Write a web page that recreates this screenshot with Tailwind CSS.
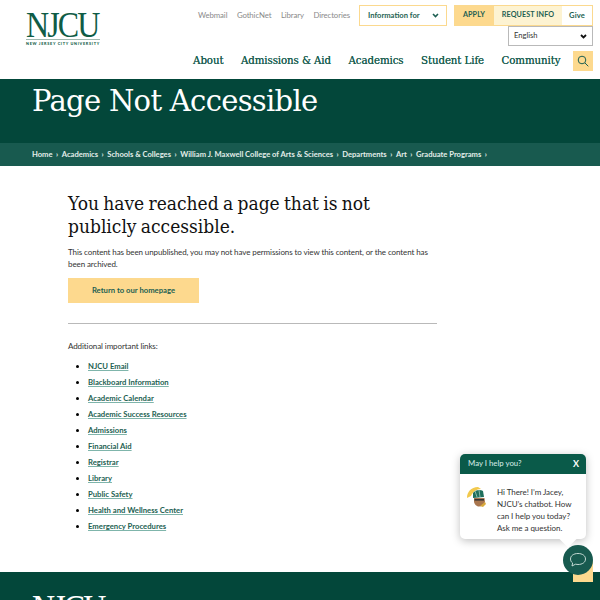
<!DOCTYPE html>
<html><head><meta charset="utf-8"><script src="https://cdn.jsdelivr.net/npm/@tailwindcss/browser@4"></script></head>
<body class="font-['Lato',sans-serif] bg-white">
<div class="relative w-[600px] h-[600px] overflow-hidden">
<header class="h-[79px] flex justify-between pl-[26px] pr-[7px]">
  <div class="pt-[9px] w-[74px] text-[#0f5c46]">
    <div class="font-['Liberation_Serif',serif] text-[32px] leading-[28px] tracking-[-1.9px] h-[30px] whitespace-nowrap scale-y-[1.1] origin-top">NJCU</div>
    <div class="border-t border-[#9fb8ae] pt-[1px] text-[3.8px] leading-[5px] font-black tracking-[0.72px] whitespace-nowrap">NEW JERSEY CITY UNIVERSITY</div>
  </div>
  <div class="flex flex-col items-end">
    <div class="flex items-start pt-[5px]">
      <div class="flex gap-[9.500px] h-[21px] items-center text-[7.800px] tracking-[-0.1px] text-[#8a8a8a] mr-[9px]"><span>Webmail</span><span>GothicNet</span><span>Library</span><span>Directories</span></div>
      <div class="w-[88px] h-[21px] border border-[#fbd98f] flex items-center justify-between pl-[8px] pr-[7px] text-[7.600px] font-bold text-[#1d5f52] mr-[7px]"><span>Information for</span><svg width="7" height="5" viewBox="0 0 7 5" fill="none" stroke="#1d5f52" stroke-width="1.6"><path d="M1 1l2.5 2.5L6 1"/></svg></div>
      <div class="flex flex-col items-end">
        <div class="flex h-[21px] w-[139px] border border-[#fbd98f] text-[7.200px] font-bold text-[#1d5f52] tracking-[0.1px]">
          <div class="w-[38px] bg-[#fdd98e] flex items-center justify-center">APPLY</div>
          <div class="w-[69px] bg-[#fdf3d2] border-l border-[#fbd98f] flex items-center justify-center">REQUEST INFO</div>
          <div class="flex-1 flex items-center justify-center text-[7.600px]">Give</div>
        </div>
        <div class="w-[85px] h-[20px] border border-[#b9b9b9] flex items-center justify-between pl-[5px] pr-[5px] text-[7.600px] text-[#333]"><span>English</span><svg width="7" height="5" viewBox="0 0 7 5" fill="none" stroke="#111" stroke-width="1.8"><path d="M1 1l2.5 2.5L6 1"/></svg></div>
      </div>
    </div>
    <div class="flex items-center gap-[17.500px] mt-[5px] font-['DejaVu_Serif_Condensed','DejaVu_Serif',serif] text-[11.400px] tracking-[-0.1px] text-[#1d5f52] [text-shadow:0_0_0.4px_#1d5f52]">
      <span>About</span><span>Admissions &amp; Aid</span><span>Academics</span><span>Student Life</span><span>Community</span>
      <div class="w-[20px] h-[20px] bg-[#fdd98e] flex items-center justify-center -ml-[5px]"><svg width="12" height="12" viewBox="0 0 12 12" fill="none" stroke="#1d5f52" stroke-width="1"><circle cx="5" cy="5" r="3.8"/><path d="M8 8l3.3 3.3"/></svg></div>
    </div>
  </div>
</header>
<section class="h-[64px] bg-[#03473a] pl-[32px] pt-[3px]"><h1 class="font-['DejaVu_Serif',serif] text-[29px] leading-[38px] tracking-[-0.7px] text-white">Page Not Accessible</h1></section>
<nav class="h-[23px] bg-[#185a4f] pl-[32px] flex items-center gap-[3.500px] text-[7.600px] font-bold text-[#e4eeea] whitespace-nowrap">
  <span>Home</span><span>›</span><span>Academics</span><span>›</span><span>Schools &amp; Colleges</span><span>›</span><span>William J. Maxwell College of Arts &amp; Sciences</span><span>›</span><span>Departments</span><span>›</span><span>Art</span><span>›</span><span>Graduate Programs</span><span>›</span>
</nav>
<main class="pl-[68px] pt-[26px] h-[380px] box-content">
  <h2 class="font-['DejaVu_Serif_Condensed','DejaVu_Serif',serif] text-[19px] leading-[23px] [word-spacing:-1.1px] text-[#111] w-[369px]">You have reached a page that is not publicly accessible.</h2>
  <p class="mt-[8px] text-[8px] leading-[12px] tracking-[-0.1px] text-[#333] w-[369px]">This content has been unpublished, you may not have permissions to view this content, or the content has been archived.</p>
  <a class="mt-[8px] w-[131px] h-[25px] bg-[#fdd98e] flex items-center justify-center text-[7.700px] font-bold text-[#1d5f52]">Return to our homepage</a>
  <div class="mt-[20px] w-[369px] border-t border-[#b9b9b9]"></div>
  <p class="mt-[16px] text-[8px] leading-[12px] tracking-[-0.1px] text-[#333]">Additional important links:</p>
  <ul class="mt-[6px] pl-[20px] list-disc text-[7.700px] leading-[16px] font-bold text-[#1d5f52] marker:text-black">
    <li><a class="underline decoration-[#7fb5ab]">NJCU Email</a></li>
    <li><a class="underline decoration-[#7fb5ab]">Blackboard Information</a></li>
    <li><a class="underline decoration-[#7fb5ab]">Academic Calendar</a></li>
    <li><a class="underline decoration-[#7fb5ab]">Academic Success Resources</a></li>
    <li><a class="underline decoration-[#7fb5ab]">Admissions</a></li>
    <li><a class="underline decoration-[#7fb5ab]">Financial Aid</a></li>
    <li><a class="underline decoration-[#7fb5ab]">Registrar</a></li>
    <li><a class="underline decoration-[#7fb5ab]">Library</a></li>
    <li><a class="underline decoration-[#7fb5ab]">Public Safety</a></li>
    <li><a class="underline decoration-[#7fb5ab]">Health and Wellness Center</a></li>
    <li><a class="underline decoration-[#7fb5ab]">Emergency Procedures</a></li>
  </ul>
</main>
<footer class="h-[28px] bg-[#03473a] pl-[32px] pt-[18px] overflow-hidden"><div class="font-['Liberation_Serif',serif] text-[32px] leading-[32px] tracking-[-1.9px] text-white scale-y-[1.1] origin-top">NJCU</div></footer>
<div class="absolute left-[573px] top-[561px] w-[20px] h-[21px] bg-[#fdd98e]"></div>
<div class="absolute left-[460px] top-[454px] w-[126px] h-[85px] rounded-[5px] bg-white shadow-[0_2px_8px_rgba(0,0,0,0.25)]">
  <div class="h-[20px] bg-[#0a5a49] rounded-t-[5px] flex items-center justify-between pl-[8px] pr-[7px] text-[7.800px] font-medium text-[#cfe6e0]"><span>May I help you?</span><span class="text-white font-bold text-[9px]">X</span></div>
  <div class="flex pl-[6px]">
    <svg class="mt-[12px] shrink-0" width="21" height="22" viewBox="0 0 21 22"><path d="M1 12C1 6 5 1 12 1l3 2c-5 0-8 3-10 7z" fill="#f2c94c"/><path d="M7 7c2-3 7-4 10-2l1 6-11 1z" fill="#1f6f5c"/><path d="M9 5l2 6M13 4l1 7" stroke="#cfe6e0" stroke-width="0.6"/><path d="M8 12h10.500l.5 4c-1 3-3 4.500-6 4.500S8.500 18 8 16z" fill="#a9764e"/><rect x="8.500" y="13" width="9.500" height="1.600" fill="#333"/><path d="M14 20l5-4 1 2-3 3z" fill="#d9a93a"/></svg>
    <p class="ml-[10px] mt-[11.500px] w-[76px] text-[8px] leading-[12px] tracking-[-0.05px] text-[#333]">Hi There! I’m Jacey, NJCU’s chatbot. How can I help you today? Ask me a question.</p>
  </div>
  <div class="absolute right-[12px] -bottom-[6px] w-[12px] h-[12px] bg-white rotate-45"></div>
</div>
<div class="absolute left-[563px] top-[545px] w-[30px] h-[30px] rounded-full bg-[#185a4f] flex items-center justify-center"><svg width="18" height="16" viewBox="0 0 18 16" fill="none" stroke="#d5e5e0" stroke-width="0.9"><path d="M9 1.500c4.400 0 7.500 2.200 7.500 5.500S13.400 12.500 9 12.500c-.9 0-1.700-.1-2.500-.3L3 14l.6-3C2.200 10 1.500 8.600 1.500 7 1.500 3.700 4.600 1.500 9 1.500z"/></svg></div>
</div>
</body></html>
